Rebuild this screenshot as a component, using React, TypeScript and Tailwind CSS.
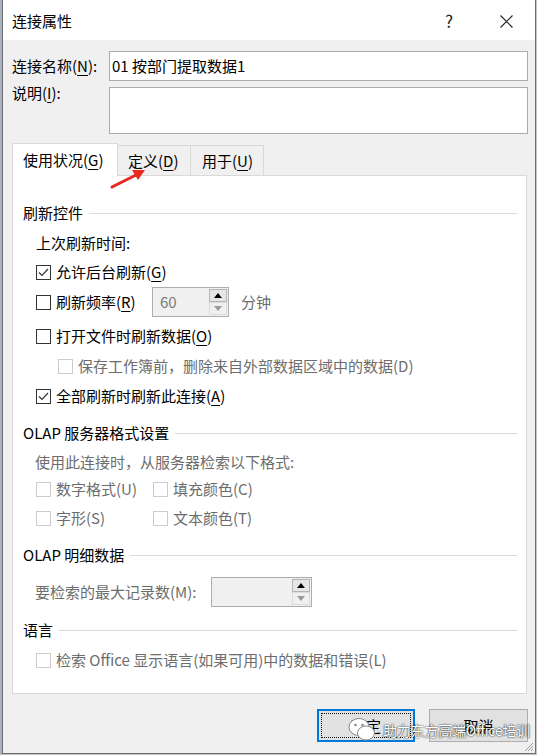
import React from "react";

function U({ c }: { c: string }) {
  return <span className="underline underline-offset-[3px] decoration-1">{c}</span>;
}

function Box({ checked, disabled }: { checked?: boolean; disabled?: boolean }) {
  return (
    <span
      className={
        disabled
          ? "w-[15px] h-[15px] shrink-0 border border-[#cccccc] bg-white flex items-center justify-center"
          : "w-[15px] h-[15px] shrink-0 border border-[#333333] bg-white flex items-center justify-center"
      }
    >
      {checked && (
        <svg width="13" height="13" viewBox="0 0 13 13">
          <path d="M2 6.5 L5 9.5 L11 3" fill="none" stroke="#333" strokeWidth="1.2" />
        </svg>
      )}
    </span>
  );
}

function Spin({ wide, value }: { wide?: boolean; value?: string }) {
  return (
    <div
      className={
        wide
          ? "w-[101px] h-[30px] border border-[#adadad] bg-[#f0f0f0] flex"
          : "w-[77px] h-[30px] border border-[#adadad] bg-[#f0f0f0] flex"
      }
    >
      <div className="flex-1 pl-[7px] flex items-center text-[#7a7a7a] text-[15px]">{value}</div>
      <div className="w-[20px] flex flex-col p-[1px] gap-0">
        <div className="h-[13px] border border-[#b4b4b4] bg-[#e6e6e6] flex items-center justify-center">
          <svg width="8" height="5" viewBox="0 0 8 5">
            <path d="M0 5 L4 0 L8 5 Z" fill="#000" />
          </svg>
        </div>
        <div className="h-[13px] border border-[#dcdcdc] bg-[#f0f0f0] flex items-center justify-center">
          <svg width="8" height="5" viewBox="0 0 8 5">
            <path d="M0 0 L4 5 L8 0 Z" fill="#9a9a9a" />
          </svg>
        </div>
      </div>
    </div>
  );
}

function Header({ text, cls }: { text: string; cls: string }) {
  return (
    <div className={"flex items-center pl-[10px] pr-[9px] " + cls}>
      <span className="text-black">{text}</span>
      <div className="flex-1 h-px bg-[#dcdcdc] ml-[6px]" />
    </div>
  );
}

export default function App() {
  return (
    <div className="w-[537px] h-[755px] bg-[#c4c4c4] flex relative overflow-hidden font-['Noto_Sans_CJK_SC',sans-serif] text-[15px] leading-[20px] text-black">
      <div className="w-[2px] h-full bg-[#aab3c4]" />
      <div className="w-[534px] h-[754px] border border-[#6e6e6e] border-t-0 bg-[#f0f0f0] flex flex-col">
        {/* Title bar */}
        <div className="h-[40px] bg-white flex items-center pl-[9px] pr-[22px] pt-[2px]">
          <span className="flex-1">连接属性</span>
          <span className="text-[17px] text-[#222]">?</span>
          <svg className="ml-[47px]" width="13" height="13" viewBox="0 0 13 13">
            <path d="M0.5 0.5 L12.5 12.5 M12.5 0.5 L0.5 12.5" stroke="#222" strokeWidth="1.1" />
          </svg>
        </div>

        {/* Name */}
        <div className="flex items-center mt-[11px] pl-[9px]">
          <div className="w-[97px]">
            连接名称(<U c="N" />):
          </div>
          <div className="w-[419px] h-[30px] border border-[#ababab] bg-white flex items-center pl-[2px]">
            01 按部门提取数据1
          </div>
        </div>
        <div className="flex items-start mt-[6px] pl-[9px]">
          <div className="w-[97px] -mt-[4px]">
            说明(<U c="I" />):
          </div>
          <div className="w-[419px] h-[47px] border border-[#ababab] bg-white" />
        </div>

        {/* Tabs */}
        <div className="flex items-end h-[32px] mt-[9px] ml-[9px]">
          <div className="relative z-10 w-[106px] h-[33px] -mb-px border border-b-0 border-[#d9d9d9] bg-white flex items-center pl-[10px] pb-[1px]">
            使用状况(<U c="G" />)
          </div>
          <div className="w-[74px] h-[30px] -ml-px border border-b-0 border-[#d9d9d9] bg-[#f0f0f0] flex items-center pl-[10px]">
            定义(<U c="D" />)
          </div>
          <div className="w-[74px] h-[30px] -ml-px border border-b-0 border-[#d9d9d9] bg-[#f0f0f0] flex items-center pl-[11px]">
            用于(<U c="U" />)
          </div>
        </div>

        {/* Panel */}
        <div className="ml-[9px] w-[515px] h-[519px] border border-[#d9d9d9] bg-white flex flex-col pt-[22px]">
          <Header text="刷新控件" cls="h-[30px]" />
          <div className="h-[29px] flex items-center pl-[23px]">上次刷新时间:</div>
          <div className="h-[30px] flex items-center pl-[23px] gap-[5px]">
            <Box checked />
            <span>
              允许后台刷新(<U c="G" />)
            </span>
          </div>
          <div className="h-[30px] flex items-center pl-[23px]">
            <div className="w-[116px] flex items-center gap-[5px]">
              <Box />
              <span>
                刷新频率(<U c="R" />)
              </span>
            </div>
            <Spin value="60" />
            <span className="ml-[12px] text-[#6d6d6d]">分钟</span>
          </div>
          <div className="h-[30px] mt-[4px] flex items-center pl-[23px] gap-[5px]">
            <Box />
            <span>
              打开文件时刷新数据(<U c="O" />)
            </span>
          </div>
          <div className="h-[30px] flex items-center pl-[45px] gap-[5px] text-[#6d6d6d]">
            <Box disabled />
            <span>保存工作簿前，删除来自外部数据区域中的数据(D)</span>
          </div>
          <div className="h-[30px] flex items-center pl-[23px] gap-[5px]">
            <Box checked />
            <span>
              全部刷新时刷新此连接(<U c="A" />)
            </span>
          </div>

          <Header text="OLAP 服务器格式设置" cls="h-[30px] mt-[7px]" />
          <div className="h-[28px] flex items-center pl-[22px] text-[#6d6d6d]">使用此连接时，从服务器检索以下格式:</div>
          <div className="h-[26px] flex items-center pl-[23px] text-[#6d6d6d]">
            <div className="w-[117px] flex items-center gap-[5px]">
              <Box disabled />
              <span>数字格式(U)</span>
            </div>
            <div className="flex items-center gap-[5px]">
              <Box disabled />
              <span>填充颜色(C)</span>
            </div>
          </div>
          <div className="h-[32px] flex items-center pl-[23px] text-[#6d6d6d]">
            <div className="w-[117px] flex items-center gap-[5px]">
              <Box disabled />
              <span>字形(S)</span>
            </div>
            <div className="flex items-center gap-[5px]">
              <Box disabled />
              <span>文本颜色(T)</span>
            </div>
          </div>

          <Header text="OLAP 明细数据" cls="h-[30px] mt-[6px]" />
          <div className="h-[44px] flex items-center pl-[22px]">
            <span className="w-[176px] text-[#6d6d6d]">要检索的最大记录数(M):</span>
            <Spin wide />
          </div>
          <Header text="语言" cls="h-[30px] mt-[1px]" />
          <div className="h-[30px] flex items-center pl-[23px] gap-[5px] text-[#6d6d6d]">
            <Box disabled />
            <span>检索 Office 显示语言(如果可用)中的数据和错误(L)</span>
          </div>
        </div>

        {/* Buttons */}
        <div className="flex justify-end gap-[14px] mt-[15px] pr-[7px]">
          <div className="w-[98px] h-[33px] border-2 border-[#0078d7] bg-[#e1e1e1] p-[2px]">
            <div className="w-full h-full border border-dotted border-[#111] flex items-center justify-center">确定</div>
          </div>
          <div className="w-[99px] h-[33px] border border-[#adadad] bg-[#e1e1e1] flex items-center justify-center">取消</div>
        </div>
        <div className="flex-1 flex justify-end items-end pr-[1px] pb-[1px]">
          <svg width="10" height="10" viewBox="0 0 10 10">
            <path d="M9 1 L1 9 M9 4 L4 9 M9 7 L7 9" stroke="#9a9a9a" strokeWidth="1" />
          </svg>
        </div>
      </div>
      <div className="w-[1px] h-full bg-[#c4c4c4]" />

      {/* Red arrow annotation */}
      <svg className="absolute left-[108px] top-[165px]" width="42" height="26" viewBox="0 0 42 26">
        <path d="M4 22 L28 10" stroke="#e8281c" strokeWidth="3" strokeLinecap="round" />
        <path d="M37 5 L24 5 L30 15 Z" fill="#e8281c" />
      </svg>

      {/* Watermark */}
      <div className="absolute left-[348px] top-[717px] flex items-center gap-[7px] pointer-events-none whitespace-nowrap">
        <svg width="28" height="26" viewBox="0 0 28 26">
          <ellipse cx="11" cy="10" rx="10" ry="8.5" fill="#fff" stroke="#8a8a8a" strokeWidth="1" />
          <ellipse cx="18" cy="16" rx="8.5" ry="7" fill="#fff" stroke="#8a8a8a" strokeWidth="1" />
          <circle cx="7.5" cy="8" r="1.3" fill="#8a8a8a" />
          <circle cx="14.5" cy="8" r="1.3" fill="#8a8a8a" />
        </svg>
        <span className="whitespace-nowrap text-white text-[14px] tracking-[-0.2px] [text-shadow:0_0_2px_rgba(0,0,0,0.75),0_0_1px_rgba(0,0,0,0.8)]">
          助力东方高端Office培训
        </span>
      </div>
    </div>
  );
}
